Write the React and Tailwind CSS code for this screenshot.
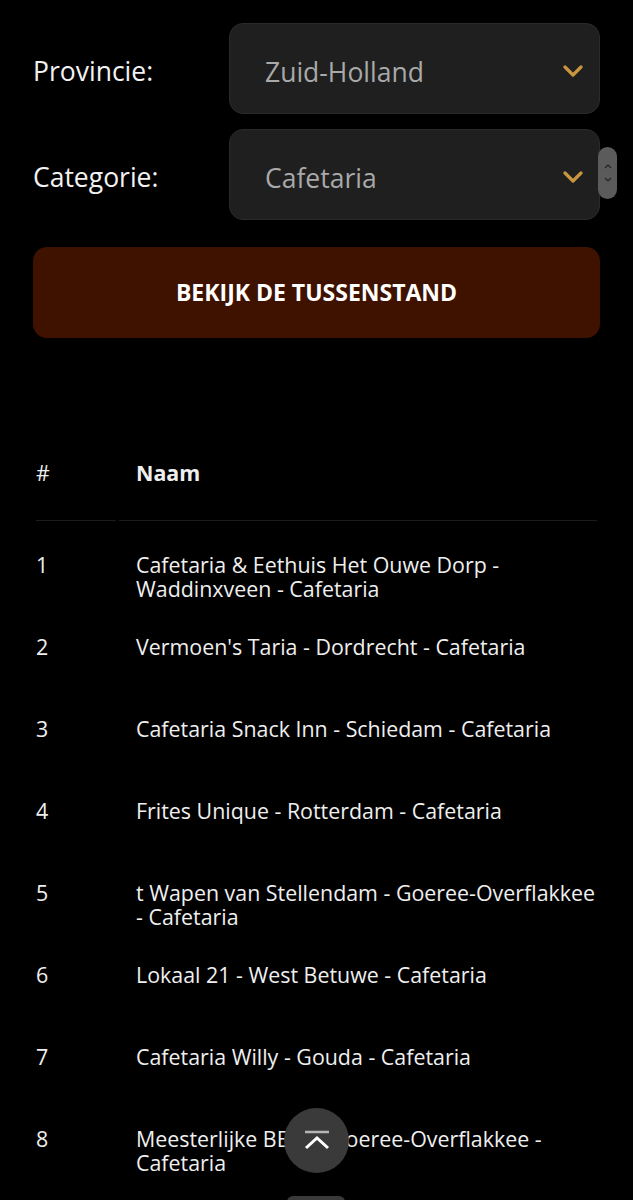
import React from "react";

const rows = [
  "Cafetaria & Eethuis Het Ouwe Dorp - Waddinxveen - Cafetaria",
  "Vermoen's Taria - Dordrecht - Cafetaria",
  "Cafetaria Snack Inn - Schiedam - Cafetaria",
  "Frites Unique - Rotterdam - Cafetaria",
  "t Wapen van Stellendam - Goeree-Overflakkee - Cafetaria",
  "Lokaal 21 - West Betuwe - Cafetaria",
  "Cafetaria Willy - Gouda - Cafetaria",
  "Meesterlijke BEST - Goeree-Overflakkee - Cafetaria",
];

function Chevron() {
  return (
    <svg width="20" height="12" viewBox="0 0 20 12" className="shrink-0 mt-[4px]">
      <path d="M2 2 L10 10 L18 2" fill="none" stroke="#c9963f" strokeWidth="3.2" strokeLinecap="round" strokeLinejoin="round" />
    </svg>
  );
}

function SelectRow({ label, value, spinner }) {
  return (
    <div className="flex items-center">
      <div className="w-[196px] text-[26.5px] text-[#f2f2f2] leading-none pt-[6px]">{label}</div>
      <div className="relative flex-1">
        <div className="h-[91px] rounded-[14px] bg-[#1f1f1f] border border-[#2a2a2a] flex items-center pl-[35px] pr-[16px]">
          <span className="flex-1 text-[26.5px] text-[#a9a9a9] pt-[8px]">{value}</span>
          <Chevron />
        </div>
        {spinner && (
          <div className="absolute right-[-17px] top-[18px] w-[19px] h-[52px] rounded-full bg-[#5b5b5b] flex flex-col items-center justify-center gap-[8px]">
            <svg width="8" height="5" viewBox="0 0 8 5"><path d="M1 4 L4 1 L7 4" fill="none" stroke="#222" strokeWidth="1.2" /></svg>
            <svg width="8" height="5" viewBox="0 0 8 5"><path d="M1 1 L4 4 L7 1" fill="none" stroke="#222" strokeWidth="1.2" /></svg>
          </div>
        )}
      </div>
    </div>
  );
}

export default function App() {
  return (
    <div className="relative min-h-screen bg-black overflow-hidden" style={{ fontFamily: "'Open Sans', 'Noto Sans', sans-serif" }}>
      <div className="px-[33px] pt-[23px] flex flex-col">
        <div className="flex flex-col gap-[15px]">
          <SelectRow label="Provincie:" value="Zuid-Holland" />
          <SelectRow label="Categorie:" value="Cafetaria" spinner />
        </div>
        <button className="mt-[27px] h-[91px] w-full rounded-[14px] bg-[#3f1200] text-white font-bold text-[23px]">
          BEKIJK DE TUSSENSTAND
        </button>

        <div className="mt-[123px] px-[3px] text-[#efefef]">
          <div className="flex gap-[3px]">
            <div className="w-[80px] pb-[35px] border-b border-[#1c1c1c] text-[21.4px] leading-[24px]">#</div>
            <div className="flex-1 pl-[17px] pb-[35px] border-b border-[#1c1c1c] text-[21.4px] leading-[24px] font-bold">Naam</div>
          </div>
          {rows.map((r, i) => (
            <div key={i} className="flex gap-[3px] h-[82px] pt-[32px] text-[21.4px] leading-[24px]">
              <div className="w-[80px]">{i + 1}</div>
              <div className="flex-1 pl-[17px]">{r}</div>
            </div>
          ))}
        </div>
      </div>

      <div className="absolute left-[284px] top-[1108px] w-[65px] h-[65px] rounded-full bg-[#3a3a3a] flex items-center justify-center">
        <svg width="28" height="28" viewBox="0 0 28 28">
          <line x1="2" y1="5" x2="26" y2="5" stroke="#b5b5b5" strokeWidth="2.5" />
          <path d="M3 21 L14 11 L25 21" fill="none" stroke="#ffffff" strokeWidth="3" />
        </svg>
      </div>
      <div className="absolute left-[287px] top-[1196px] w-[58px] h-[10px] rounded-t-[6px] bg-[#3a3a3a]" />
    </div>
  );
}
